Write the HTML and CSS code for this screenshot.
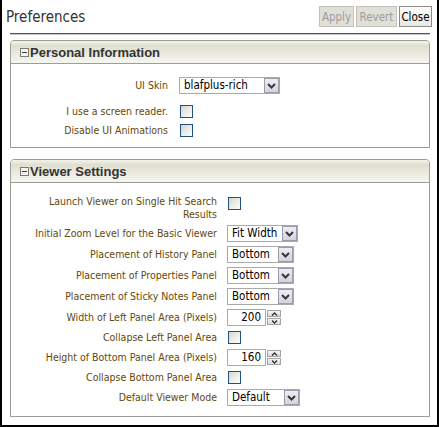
FILE: index.html
```html
<!DOCTYPE html>
<html>
<head>
<meta charset="utf-8">
<title>Preferences</title>
<link rel="stylesheet" href="styles.css">
</head>
<body>
<div class="window">
  <div class="topbar">
    <div class="title">Preferences</div>
    <div class="actions">
      <button class="btn btn-apply" disabled>Apply</button>
      <button class="btn btn-revert" disabled>Revert</button>
      <button class="btn btn-close">Close</button>
    </div>
  </div>
  <div class="content">
    <div class="rule"></div>

    <section class="panel">
      <div class="panel-head"><span class="toggle"></span><span class="panel-title">Personal Information</span></div>
      <div class="form form-personal">
        <div class="row row-skin">
          <span class="lbl">UI Skin</span>
          <span class="select w-skin"><span class="val">blafplus-rich</span><span class="arrow"><svg width="9" height="6" viewBox="0 0 9 6"><polyline points="1,1 4.5,4.5 8,1" fill="none" stroke="#383838" stroke-width="2"/></svg></span></span>
        </div>
        <div class="row">
          <span class="lbl">I use a screen reader.</span>
          <span class="cb"></span>
        </div>
        <div class="row">
          <span class="lbl">Disable UI Animations</span>
          <span class="cb"></span>
        </div>
      </div>
    </section>

    <section class="panel">
      <div class="panel-head"><span class="toggle"></span><span class="panel-title">Viewer Settings</span></div>
      <div class="form form-viewer">
        <div class="row row-top">
          <span class="lbl lbl-wrap">Launch Viewer on Single Hit Search Results</span>
          <span class="cb cb-top"></span>
        </div>
        <div class="row">
          <span class="lbl">Initial Zoom Level for the Basic Viewer</span>
          <span class="select w-fit"><span class="val">Fit Width</span><span class="arrow"><svg width="9" height="6" viewBox="0 0 9 6"><polyline points="1,1 4.5,4.5 8,1" fill="none" stroke="#383838" stroke-width="2"/></svg></span></span>
        </div>
        <div class="row">
          <span class="lbl">Placement of History Panel</span>
          <span class="select w-bottom"><span class="val">Bottom</span><span class="arrow"><svg width="9" height="6" viewBox="0 0 9 6"><polyline points="1,1 4.5,4.5 8,1" fill="none" stroke="#383838" stroke-width="2"/></svg></span></span>
        </div>
        <div class="row">
          <span class="lbl">Placement of Properties Panel</span>
          <span class="select w-bottom"><span class="val">Bottom</span><span class="arrow"><svg width="9" height="6" viewBox="0 0 9 6"><polyline points="1,1 4.5,4.5 8,1" fill="none" stroke="#383838" stroke-width="2"/></svg></span></span>
        </div>
        <div class="row">
          <span class="lbl">Placement of Sticky Notes Panel</span>
          <span class="select w-bottom"><span class="val">Bottom</span><span class="arrow"><svg width="9" height="6" viewBox="0 0 9 6"><polyline points="1,1 4.5,4.5 8,1" fill="none" stroke="#383838" stroke-width="2"/></svg></span></span>
        </div>
        <div class="row">
          <span class="lbl">Width of Left Panel Area (Pixels)</span>
          <span class="spin"><span class="field">200</span><span class="spin-btns"><span class="sb"><svg width="7" height="4" viewBox="0 0 7 4"><polyline points="1,3.5 3.5,1 6,3.5" fill="none" stroke="#333" stroke-width="1.3"/></svg></span><span class="sb"><svg width="7" height="4" viewBox="0 0 7 4"><polyline points="1,0.5 3.5,3 6,0.5" fill="none" stroke="#333" stroke-width="1.3"/></svg></span></span></span>
        </div>
        <div class="row">
          <span class="lbl">Collapse Left Panel Area</span>
          <span class="cb"></span>
        </div>
        <div class="row">
          <span class="lbl">Height of Bottom Panel Area (Pixels)</span>
          <span class="spin"><span class="field">160</span><span class="spin-btns"><span class="sb"><svg width="7" height="4" viewBox="0 0 7 4"><polyline points="1,3.5 3.5,1 6,3.5" fill="none" stroke="#333" stroke-width="1.3"/></svg></span><span class="sb"><svg width="7" height="4" viewBox="0 0 7 4"><polyline points="1,0.5 3.5,3 6,0.5" fill="none" stroke="#333" stroke-width="1.3"/></svg></span></span></span>
        </div>
        <div class="row">
          <span class="lbl">Collapse Bottom Panel Area</span>
          <span class="cb"></span>
        </div>
        <div class="row">
          <span class="lbl">Default Viewer Mode</span>
          <span class="select w-default"><span class="val">Default</span><span class="arrow"><svg width="9" height="6" viewBox="0 0 9 6"><polyline points="1,1 4.5,4.5 8,1" fill="none" stroke="#383838" stroke-width="2"/></svg></span></span>
        </div>
      </div>
    </section>
  </div>
</div>
</body>
</html>
```

FILE: styles.css
```css
html, body {
  margin: 0;
  padding: 0;
}
body {
  font-family: "DejaVu Sans Condensed", "Liberation Sans", Arial, sans-serif;
  background: #fff;
  width: 439px;
  height: 427px;
  overflow: hidden;
}
.window {
  box-sizing: border-box;
  width: 439px;
  height: 427px;
  border: 2px solid #000;
  border-top: 0;
}
.topbar {
  box-sizing: border-box;
  height: 33px;
  display: flex;
  justify-content: space-between;
  align-items: flex-start;
  padding: 6px 5px 0 4px;
}
.title {
  font-size: 15px;
  line-height: 17px;
  color: #333;
  margin-top: 3px;
}
.actions {
  display: flex;
  gap: 2px;
}
.btn {
  box-sizing: border-box;
  height: 21px;
  padding: 0;
  font-family: "DejaVu Sans Condensed", "Liberation Sans", Arial, sans-serif;
  font-size: 11.5px;
  color: #000;
  border: 1px solid #8c8c84;
  border-radius: 0;
  background: linear-gradient(#fdfdfb, #e9e9e2);
}
.btn:disabled {
  color: #9c9c9c;
  border-color: #c2c2ba;
  background: #e0e0d8;
}
.btn-apply { width: 35px; }
.btn-revert { width: 41px; }
.btn-close { width: 33px; }

.content {
  display: flex;
  flex-direction: column;
  margin: 0 7px 0 8px;
}
.rule {
  border-top: 1px solid #505050;
  border-bottom: 1px solid #c8c8c8;
  margin-bottom: 5px;
}
.panel {
  border: 1px solid #9d9d95;
  border-radius: 4px 4px 0 0;
}
.panel + .panel {
  margin-top: 11px;
}
.panel-head {
  height: 22px;
  display: flex;
  align-items: center;
  padding-left: 9px;
  border-bottom: 1px solid #9d9d95;
  border-radius: 3px 3px 0 0;
  background: linear-gradient(#f3f3ec 0%, #dfdfd0 22%, #e9e9de 55%, #f6f6f0 100%);
}
.toggle {
  position: relative;
  box-sizing: border-box;
  width: 9px;
  height: 9px;
  border: 1px solid #7a7a7a;
  background: #f4f4ee;
  margin-right: 1px;
}
.toggle::after {
  content: "";
  position: absolute;
  left: 1px;
  right: 1px;
  top: 3px;
  height: 1px;
  background: #3a3a3a;
}
.panel-title {
  font-family: "Liberation Sans", Arial, sans-serif;
  font-size: 13px;
  font-weight: bold;
  color: #333;
}

.form {
  display: flex;
  flex-direction: column;
  gap: 4px;
}
.form-personal {
  padding: 13px 0 9px 0;
}
.form-viewer {
  padding: 12px 0 10px 0;
}
.row {
  display: flex;
  align-items: center;
}
.row-skin {
  margin-bottom: 6px;
}
.row-top {
  align-items: flex-start;
}
.lbl {
  box-sizing: border-box;
  flex: 0 0 auto;
  font-size: 10.5px;
  line-height: 13px;
  color: #634808;
  text-align: right;
}
.form-personal .lbl {
  width: 157px;
  margin-right: 11px;
}
.form-viewer .lbl {
  width: 206px;
  margin-right: 10px;
}
.form-viewer .lbl-wrap {
  padding-left: 16px;
}

.cb {
  box-sizing: border-box;
  width: 13px;
  height: 13px;
  margin: 1px 0 1px 1px;
  border: 1px solid #1d5180;
  background: linear-gradient(135deg, #d6d6d0 0%, #ededea 55%, #fdfdfd 100%);
}
.cb-top {
  margin-top: 2px;
}

.select {
  box-sizing: border-box;
  display: flex;
  align-items: center;
  height: 17px;
  border: 1px solid #aaaaaa;
  background: #fff;
}
.select .val {
  flex: 1;
  font-size: 11.5px;
  line-height: 15px;
  padding-left: 4px;
  color: #000;
  white-space: nowrap;
}
.select .arrow {
  box-sizing: border-box;
  width: 15px;
  height: 15px;
  display: flex;
  align-items: center;
  justify-content: center;
  border: 1px solid #9b9bab;
  background: linear-gradient(#eeeef4, #d3d3de);
}
.w-skin { width: 101px; }
.w-fit { width: 71px; }
.w-bottom { width: 67px; }
.w-default { width: 73px; }

.spin {
  display: flex;
  align-items: center;
  gap: 1px;
}
.spin .field {
  box-sizing: border-box;
  width: 39px;
  height: 17px;
  border: 1px solid #aaaaaa;
  font-size: 11.5px;
  line-height: 15px;
  text-align: right;
  padding-right: 4px;
  color: #000;
}
.spin-btns {
  display: flex;
  flex-direction: column;
  gap: 1px;
}
.sb {
  box-sizing: border-box;
  width: 14px;
  height: 7px;
  display: flex;
  align-items: center;
  justify-content: center;
  border: 1px solid #a4a4a4;
  background: linear-gradient(#f4f4f4, #dcdcdc);
}
```
